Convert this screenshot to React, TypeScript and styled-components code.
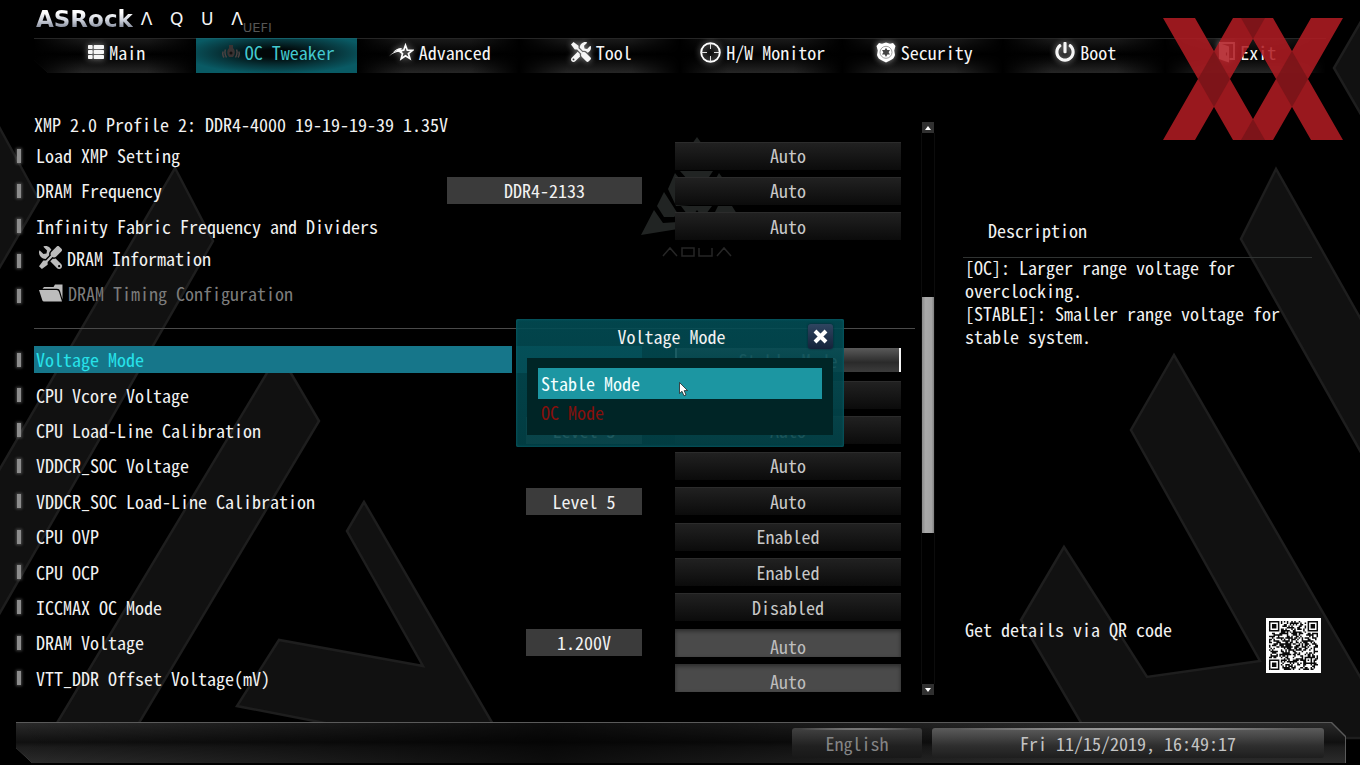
import React from 'react';
import styled, { createGlobalStyle, css } from 'styled-components';
import { FaThList, FaTools, FaPowerOff } from 'react-icons/fa';

const uiFont =
  '"Noto Sans Mono CJK JP", "Noto Sans CJK JP", "Liberation Mono", monospace';

const GlobalStyle = createGlobalStyle`
  * { box-sizing: border-box; }
  body {
    margin: 0;
    background: #000;
    color: #f2f2f2;
    font-family: ${uiFont};
    font-feature-settings: "hwid";
    font-size: 18px;
    line-height: 24px;
  }
  button, input, select {
    font: inherit;
    font-feature-settings: inherit;
    color: inherit;
    margin: 0;
    border: 0;
    border-radius: 0;
  }
`;

const Screen = styled.div`
  position: relative;
  display: flex;
  flex-direction: column;
  min-height: 100vh;
  overflow: hidden;
`;

const Backdrop = styled.svg`
  position: absolute;
  inset: 0;
  width: 100%;
  height: 100%;
`;

const Header = styled.header`
  position: relative;
  padding: 8px 34px 0;
`;

const Brand = styled.div`
  display: flex;
  align-items: flex-start;
  height: 30px;
  padding-left: 2px;
`;

const MakerName = styled.span`
  font: bold 23px/23px "DejaVu Sans", sans-serif;
  background: linear-gradient(#ffffff 20%, #c9ced8 55%, #7b8292 90%);
  background-clip: text;
  -webkit-background-clip: text;
  color: transparent;
`;

const SeriesName = styled.span`
  display: flex;
  justify-content: space-between;
  width: 102px;
  margin-left: 8px;
  font: 17px/22px "DejaVu Sans", sans-serif;
  color: #f4f4f4;
`;

const Firmware = styled.span`
  font: 13px/16px "DejaVu Sans", sans-serif;
  color: #565656;
  padding-top: 12px;
`;

const Nav = styled.nav`
  display: grid;
  grid-template-columns: repeat(8, 1fr);
  height: 35px;
  clip-path: polygon(0 0, 100% 0, 100% 100%, 14px 100%, 0 22px);
`;

const Tab = styled.button<{ $active?: boolean }>`
  display: flex;
  align-items: center;
  justify-content: center;
  gap: 5px;
  padding: 0 0 8px 4px;
  color: #f6f6f6;
  border-top: 1px solid #262626;
  background: linear-gradient(90deg, #000 0, transparent 30%, transparent 70%, #000 100%),
    linear-gradient(#191919, #000 45%, #080808 60%, #262626);
  ${(p) =>
    p.$active &&
    css`
      color: #43c9cf;
      border-top-color: #15606a;
      background: radial-gradient(ellipse 58% 60% at 50% 42%, #010708 20%, #07373d 65%, #095a64 100%);
    `}
  svg {
    flex: none;
    filter: ${(p) => (p.$active ? 'none' : 'drop-shadow(0 0 3px rgba(255,255,255,.6))')};
  }
`;

const Watermark = styled.svg`
  position: absolute;
  top: 18px;
  right: 17px;
  width: 180px;
  height: 122px;
  z-index: 2;
  pointer-events: none;
`;

const Main = styled.main`
  position: relative;
  flex: 1;
  display: grid;
  grid-template-columns: minmax(0, 1fr) 14px 377px;
  padding: 0 48px 0 14px;
`;

const Settings = styled.section`
  padding: 39px 6px 20px 0;
`;

const ProfileLine = styled.p`
  margin: 0 0 2px 20px;
`;

const RowGroup = styled.div<{ $height: number }>`
  display: grid;
  grid-auto-rows: 1fr;
  height: ${(p) => p.$height}px;
`;

const Row = styled.div`
  display: grid;
  grid-template-columns: 10px minmax(0, 1fr) auto 226px;
  align-items: center;
  padding-right: 14px;
`;

const Marker = styled.span`
  justify-self: center;
  width: 4px;
  height: 14px;
  background: #8d8d8d;
  box-shadow: 0 0 3px 1px rgba(140, 140, 140, 0.5);
`;

const RowLabel = styled.label<{ $selected?: boolean }>`
  margin-left: 10px;
  padding-left: 2px;
  height: 27px;
  line-height: 27px;
  white-space: nowrap;
  color: ${(p) => (p.$selected ? '#27e3ea' : 'inherit')};
  background: ${(p) => (p.$selected ? '#16768a' : 'transparent')};
`;

const Reading = styled.output<{ $wide?: boolean; $highlight?: boolean }>`
  width: ${(p) => (p.$wide ? 195 : p.$highlight ? 126 : 116)}px;
  height: 27px;
  line-height: 27px;
  margin: 0 33px 0 4px;
  text-align: center;
  background: ${(p) => (p.$highlight ? '#16768a' : '#3b3b3b')};
`;

const valueField = css`
  grid-column: 4;
  width: 100%;
  height: 28px;
  text-align: center;
  text-align-last: center;
  outline: none;
  color: #c8c8c8;
`;

const Choice = styled.select<{ $selected?: boolean }>`
  ${valueField}
  appearance: none;
  padding: 0 0 2px;
  border-top: 1px solid #2c2c2c;
  background: linear-gradient(#212121, #0b0b0b);
  ${(p) =>
    p.$selected &&
    css`
      border: solid #f4f4f4;
      border-width: 0 2px;
      height: 24px;
      background: linear-gradient(#5a5a5a, #2a2a2a 60%, #3c3c3c);
    `}
`;

const Entry = styled.input`
  ${valueField}
  padding: 6px 0 0;
  color: #bdbdbd;
  background: #4a4a4a;
  box-shadow: inset 0 2px 4px #2a2a2a;
`;

const SubmenuRow = styled.div`
  display: grid;
  grid-template-columns: 10px auto;
  justify-content: start;
  align-items: center;
  padding-bottom: 2px;
`;

const Submenu = styled.button`
  display: flex;
  align-items: center;
  gap: 5px;
  padding: 0 0 6px;
  margin-left: 15px;
  background: transparent;
  &:disabled { color: #7c7c7c; }
  svg { flex: none; color: #bcbcbc; }
`;

const Divider = styled.hr`
  height: 1px;
  margin: 13px 0 13px 20px;
  border: 0;
  background: #4a4a4a;
`;

const Scrollbar = styled.div`
  display: flex;
  flex-direction: column;
  align-items: center;
  padding: 49px 0 27px;
`;

const ScrollButton = styled.button`
  display: grid;
  place-items: center;
  width: 12px;
  height: 11px;
  padding: 0;
  background: #303030;
  color: #fff;
`;

const Track = styled.div`
  flex: 1;
  display: flex;
  flex-direction: column;
  width: 14px;
  border: solid #0c0c0c;
  border-width: 0 1px;
  &::before { content: ""; flex: 164; }
  &::after { content: ""; flex: 151; }
`;

const Thumb = styled.div`
  flex: 236;
  background: linear-gradient(90deg, #8a8a8a, #aaa 30%, #a4a4a4 80%, #808080);
`;

const Help = styled.aside`
  display: flex;
  flex-direction: column;
  margin-left: 28px;
  padding: 145px 0 49px;
`;

const HelpTitle = styled.h2`
  margin: 0;
  padding: 0 25px 15px;
  border-bottom: 1px solid #303332;
  font-size: 18px;
  font-weight: normal;
`;

const HelpText = styled.p`
  margin: -2px 0 0;
  padding: 0 2px;
  line-height: 23px;
`;

const QrRow = styled.div`
  display: flex;
  justify-content: space-between;
  align-items: flex-start;
  margin: auto -9px 0 2px;
  line-height: 23px;
`;

const Footer = styled.footer`
  position: relative;
  display: flex;
  justify-content: flex-end;
  gap: 10px;
  height: 41px;
  margin: 0 14px 2px 16px;
  padding: 6px 22px 5px;
  background: #5a5a5a;
  clip-path: polygon(0 0, calc(100% - 14px) 0, 100% 14px, 100% 100%, 16px 100%, 0 26px);
  &::before {
    content: "";
    position: absolute;
    inset: 1px 1px 0 0;
    background: linear-gradient(90deg, transparent, rgba(0, 0, 0, 0.7) 40%, transparent 80%),
      linear-gradient(#2a2a2a, #101010 48%, #1c1c1c 60%, #2c2c2c);
    clip-path: polygon(0 0, calc(100% - 14px) 0, 100% 14px, 100% 100%, 16px 100%, 0 25px);
  }
`;

const footerBox = css`
  position: relative;
  height: 30px;
  line-height: 30px;
  padding: 0;
  text-align: center;
  text-align-last: center;
  border-radius: 3px;
`;

const Language = styled.select`
  ${footerBox}
  appearance: none;
  width: 130px;
  color: #858585;
  background: radial-gradient(ellipse 50% 1px at 50% 1px, #aaa, transparent),
    linear-gradient(#424242, #202020 60%, #181818);
`;

const Clock = styled.time`
  ${footerBox}
  width: 392px;
  color: #c4c4c4;
  background: radial-gradient(ellipse 50% 1px at 50% 1px, #ddd, transparent),
    linear-gradient(#5c5c5c, #2e2e2e 60%, #1e1e1e);
`;

const Overlay = styled.div`
  position: absolute;
  inset: 0;
  display: grid;
  place-items: center;
  z-index: 1;
`;

const Dialog = styled.div`
  width: 328px;
  padding: 0 11px 12px;
  border-radius: 2px;
  background: linear-gradient(rgba(2, 76, 84, 0.9), rgba(2, 68, 74, 0.88));
  box-shadow: inset 0 0 3px #0a6a74;
`;

const DialogHead = styled.div`
  display: flex;
  align-items: center;
  height: 39px;
  padding: 0 0 4px 8px;
`;

const DialogTitle = styled.h2`
  flex: 1;
  margin: 0;
  text-align: center;
  font-size: 18px;
  font-weight: normal;
`;

const CloseButton = styled.button`
  display: grid;
  place-items: center;
  width: 25px;
  height: 25px;
  padding: 0;
  border-radius: 3px;
  background: linear-gradient(#2f4560, #14223a);
  box-shadow: 0 0 2px #0c1a2c;
`;

const OptionList = styled.div`
  display: flex;
  flex-direction: column;
  padding: 10px 11px 9px;
  background: #002526;
`;

const Option = styled.button<{ $selected?: boolean }>`
  position: relative;
  height: ${(p) => (p.$selected ? 31 : 27)}px;
  padding: 0 3px;
  text-align: left;
  color: ${(p) => (p.$selected ? '#f4ffff' : '#85100c')};
  background: ${(p) => (p.$selected ? '#1c96a2' : 'transparent')};
`;

const Pointer = styled.svg`
  position: absolute;
  left: 141px;
  top: 14px;
`;

/* ---------- drawings ---------- */

const TweakIcon = () => (
  <svg width="18" height="16" viewBox="0 0 18 16" fill="none" stroke="#4a4242" strokeWidth="1.500">
    <path d="M7 1H11V4Q13.500 6 12.500 10.500L11 13H7L5.500 10.500Q4.500 6 7 4Z" fill="#3a3333" stroke="none" />
    <circle cx="9" cy="9" r="1.500" fill="#111" stroke="none" />
    <path d="M3.500 5.500Q2 9 4.500 13.500M14.500 5.500Q16 9 13.500 13.500M1.200 7.500Q0 10.500 2 13.500M16.800 7.500Q18 10.500 16 13.500" />
  </svg>
);

const StarIcon = () => (
  <svg width="25" height="18" viewBox="0 0 25 18" fill="none">
    <path d="M16.500 2.200 18.300 7.200 23.500 7.400 19.400 10.600 20.900 15.600 16.500 12.700 12.200 15.700 13.500 10.700 9.400 7.500 14.700 7.200Z" stroke="#fff" strokeWidth="1.700" />
    <path d="M0 13.500Q6 6 14 7L13 9Q6 8 0 13.500ZM4 9.500Q8 4.500 13 5L11.500 7Q8 6.500 4 9.500Z" fill="#fff" />
  </svg>
);

const ScopeIcon = () => (
  <svg width="21" height="21" viewBox="0 0 21 21" fill="none" stroke="#fff">
    <circle cx="10.500" cy="10.500" r="9.300" strokeWidth="1.900" />
    <path d="M10.500 1.500v5.500M10.500 14v5.500M1.500 10.500H7M14 10.500h5.500" strokeWidth="1" stroke="#ddd" />
  </svg>
);

const BadgeIcon = () => (
  <svg width="20" height="21" viewBox="0 0 20 21">
    <path d="M3 1 6 1.800 10 .5 14 1.800 17 1 19.500 4 18.200 8.500 19 13Q18 17 14 18.500L10 20.500 6 18.500Q2 17 1 13L1.800 8.500.500 4Z" fill="#fff" />
    <circle cx="10" cy="10.300" r="6" fill="none" stroke="#888" strokeWidth=".8" />
    <path d="m10 5.800 1.300 2.300h2.700l-1.400 2.200 1.400 2.300h-2.700L10 14.900l-1.300-2.300H6l1.400-2.300L6 8.100h2.700Z" fill="#444" />
  </svg>
);

const DoorIcon = () => (
  <svg width="17" height="21" viewBox="0 0 17 21">
    <path d="M1 1H16V17H11.500" fill="none" stroke="#fff" strokeWidth="1.800" />
    <path d="M1 1 11 4.500V20.500L1 17Z" fill="#fff" />
    <path d="M8.500 10.500v3" stroke="#555" strokeWidth="1.200" />
  </svg>
);

const FolderIcon = () => (
  <svg width="24" height="18" viewBox="0 0 24 18" fill="currentColor">
    <path d="M0 6H17.500Q19.500 6 20 8L23 17.500H5Q3.800 17.500 3.400 16.500Z" />
    <path d="M3.500 4.800 5 3H14.500L16 .5H23.500V15.500L21 7Q20.500 4.800 18 4.800Z" />
  </svg>
);

const TurnedTools = styled(FaTools)`
  rotate: -90deg;
`;

const tabs = [
  { name: 'Main', icon: <FaThList size={16} /> },
  { name: 'OC Tweaker', icon: <TweakIcon />, active: true },
  { name: 'Advanced', icon: <StarIcon /> },
  { name: 'Tool', icon: <FaTools size={20} /> },
  { name: 'H/W Monitor', icon: <ScopeIcon /> },
  { name: 'Security', icon: <BadgeIcon /> },
  { name: 'Boot', icon: <FaPowerOff size={20} /> },
  { name: 'Exit', icon: <DoorIcon /> },
];

type Setting = {
  label: string;
  value: string;
  reading?: string;
  wide?: boolean;
  selected?: boolean;
  entry?: boolean;
};

const memorySettings: Setting[] = [
  { label: 'Load XMP Setting', value: 'Auto' },
  { label: 'DRAM Frequency', value: 'Auto', reading: 'DDR4-2133', wide: true },
  { label: 'Infinity Fabric Frequency and Dividers', value: 'Auto' },
];

const voltageSettings: Setting[] = [
  { label: 'Voltage Mode', value: 'Stable Mode', selected: true },
  { label: 'CPU Vcore Voltage', value: 'Auto' },
  { label: 'CPU Load-Line Calibration', value: 'Auto', reading: 'Level 5' },
  { label: 'VDDCR_SOC Voltage', value: 'Auto' },
  { label: 'VDDCR_SOC Load-Line Calibration', value: 'Auto', reading: 'Level 5' },
  { label: 'CPU OVP', value: 'Enabled' },
  { label: 'CPU OCP', value: 'Enabled' },
  { label: 'ICCMAX OC Mode', value: 'Disabled' },
  { label: 'DRAM Voltage', value: 'Auto', reading: '1.200V', entry: true },
  { label: 'VTT_DDR Offset Voltage(mV)', value: 'Auto', entry: true },
];

const SettingRow = ({ label, value, reading, wide, selected, entry }: Setting) => {
  const id = label.toLowerCase().replace(/[^a-z]+/g, '-');
  return (
    <Row>
      <Marker />
      <RowLabel htmlFor={id} $selected={selected}>{label}</RowLabel>
      {reading && <Reading htmlFor={id} $wide={wide}>{reading}</Reading>}
      {selected && <Reading htmlFor={id} $highlight />}
      {entry ? (
        <Entry id={id} type="text" defaultValue={value} />
      ) : (
        <Choice id={id} $selected={selected} defaultValue={value}>
          <option>{value}</option>
        </Choice>
      )}
    </Row>
  );
};

const qrSize = 33;

const qrPath = () => {
  let seed = 20191115;
  const next = () => {
    seed = (seed * 1103515245 + 12345) % 2147483648;
    return seed / 2147483648;
  };
  const ring = (x: number, y: number, cx: number, cy: number) =>
    Math.max(Math.abs(x - cx), Math.abs(y - cy));
  let d = '';
  for (let y = 0; y < qrSize; y++) {
    for (let x = 0; x < qrSize; x++) {
      let on = next() > 0.48;
      for (const [cx, cy] of [[3, 3], [29, 3], [3, 29]]) {
        const r = ring(x, y, cx, cy);
        if (r <= 4) on = r !== 4 && r !== 2;
      }
      const a = ring(x, y, 26, 26);
      if (a <= 2) on = a !== 1;
      if (on) d += `M${x} ${y}h1v1h-1z`;
    }
  }
  return d;
};

const QrCode = () => (
  <svg width="55" height="55" viewBox="-2 -2 37 37" role="img" aria-label="QR code">
    <rect x="-2" y="-2" width="37" height="37" fill="#fff" />
    <path d={qrPath()} fill="#0a0a0a" />
  </svg>
);

export default function App() {
  return (
    <>
      <GlobalStyle />
      <Screen>
        <Backdrop viewBox="0 0 1360 765" preserveAspectRatio="xMidYMid slice" aria-hidden="true">
          <g fill="#111" stroke="#1e1e1e" strokeWidth="2.500">
            <path d="M-3 123 39 200-3 272Z" />
            <path d="M175 168 213 241-3 618V474Z" />
            <path d="M279 353 319 421 130 738H48Z" />
            <path d="M364 502 347 531 423 666 279 640 237 706 330 724 494 726Z" />
            <path d="M1363 18 1334 68 1363 118Z" />
            <path d="M1276 169 1241 239 1363 456V323Z" />
            <path d="M1174 355 1131 430 1260 661 1147 677 1064 547 1021 620 1090 738H1363V682Z" />
          </g>
          <g fill="#212423">
            <path d="M697 137 702 144H692Z" />
            <path d="M680 171H713L707 180H688Z" />
            <path d="M675 173 682 182 690 205 676 206 668 189ZM719 173 724 180H715Z" />
            <path d="M664 192 678 214 674 217H664L657 206Z" />
            <path d="M654 210 663 223 678 222V229L641 235Z" />
            <path d="M681 206H712L706 214H700L697 210 694 214H687ZM718 206H732L737 214H714Z" />
          </g>
          <g fill="none" stroke="#262626" strokeWidth="1.500">
            <path d="M663 256 670 248 677 256M682 248H694V256H682ZM699 248V256H712V248M717 256 724 248 731 256" />
          </g>
        </Backdrop>

        <Header>
          <Brand>
            <MakerName>ASRock</MakerName>
            <SeriesName aria-label="AQUA">
              <span>Λ</span>
              <span>Q</span>
              <span>U</span>
              <span>Λ</span>
            </SeriesName>
            <Firmware>UEFI</Firmware>
          </Brand>
          <Nav>
            {tabs.map((t) => (
              <Tab key={t.name} $active={t.active}>
                {t.icon}
                {t.name}
              </Tab>
            ))}
          </Nav>
        </Header>

        <Main>
          <Settings>
            <ProfileLine>XMP 2.0 Profile 2: DDR4-4000 19-19-19-39 1.35V</ProfileLine>
            <RowGroup $height={106}>
              {memorySettings.map((s) => (
                <SettingRow key={s.label} {...s} />
              ))}
            </RowGroup>
            <RowGroup $height={71}>
              <SubmenuRow>
                <Marker />
                <Submenu>
                  <TurnedTools size={23} />
                  DRAM Information
                </Submenu>
              </SubmenuRow>
              <SubmenuRow>
                <Marker />
                <Submenu disabled>
                  <FolderIcon />
                  DRAM Timing Configuration
                </Submenu>
              </SubmenuRow>
            </RowGroup>
            <Divider />
            <RowGroup $height={354}>
              {voltageSettings.map((s) => (
                <SettingRow key={s.label} {...s} />
              ))}
            </RowGroup>
          </Settings>

          <Scrollbar>
            <ScrollButton aria-label="Scroll up">
              <svg width="6" height="4" viewBox="0 0 6 4"><path d="M3 0 6 4H0Z" fill="#fff" /></svg>
            </ScrollButton>
            <Track><Thumb /></Track>
            <ScrollButton aria-label="Scroll down">
              <svg width="6" height="4" viewBox="0 0 6 4"><path d="M0 0H6L3 4Z" fill="#fff" /></svg>
            </ScrollButton>
          </Scrollbar>

          <Help>
            <HelpTitle>Description</HelpTitle>
            <HelpText>
              [OC]: Larger range voltage for overclocking.
              <br />
              [STABLE]: Smaller range voltage for stable system.
            </HelpText>
            <QrRow>
              Get details via QR code
              <QrCode />
            </QrRow>
          </Help>
        </Main>

        <Footer>
          <Language aria-label="Language" defaultValue="English">
            <option>English</option>
          </Language>
          <Clock dateTime="2019-11-15T16:49:17">Fri 11/15/2019, 16:49:17</Clock>
        </Footer>

        <Overlay>
          <Dialog role="dialog" aria-labelledby="dialog-title">
            <DialogHead>
              <DialogTitle id="dialog-title">Voltage Mode</DialogTitle>
              <CloseButton aria-label="Close">
                <svg width="15" height="15" viewBox="0 0 15 15">
                  <path d="M2 2 13 13M13 2 2 13" stroke="#fff" strokeWidth="4" />
                </svg>
              </CloseButton>
            </DialogHead>
            <OptionList>
              <Option $selected>
                Stable Mode
                <Pointer width="10" height="15" viewBox="0 0 10 15" aria-hidden="true">
                  <path d="M.500.500V11.500L3 9.300 5 13.800 7 13 5.200 8.600H8.600Z" fill="#fff" stroke="#222" strokeWidth=".8" />
                </Pointer>
              </Option>
              <Option>OC Mode</Option>
            </OptionList>
          </Dialog>
        </Overlay>

        <Watermark viewBox="0 0 180 122" aria-hidden="true">
          <path
            fill="#b01c22"
            fillOpacity=".87"
            fillRule="nonzero"
            d="M0 0H32L102 122H70ZM78 0H110L180 122H148ZM70 0H102L32 122H0ZM148 0H180L110 122H78Z"
          />
          <path
            fill="#6a1216"
            fillOpacity=".6"
            d="M51 33 67 61 51 89 35 61ZM129 33 145 61 129 89 113 61ZM78 0H102L90 21ZM78 122H102L90 101Z"
          />
        </Watermark>
      </Screen>
    </>
  );
}
